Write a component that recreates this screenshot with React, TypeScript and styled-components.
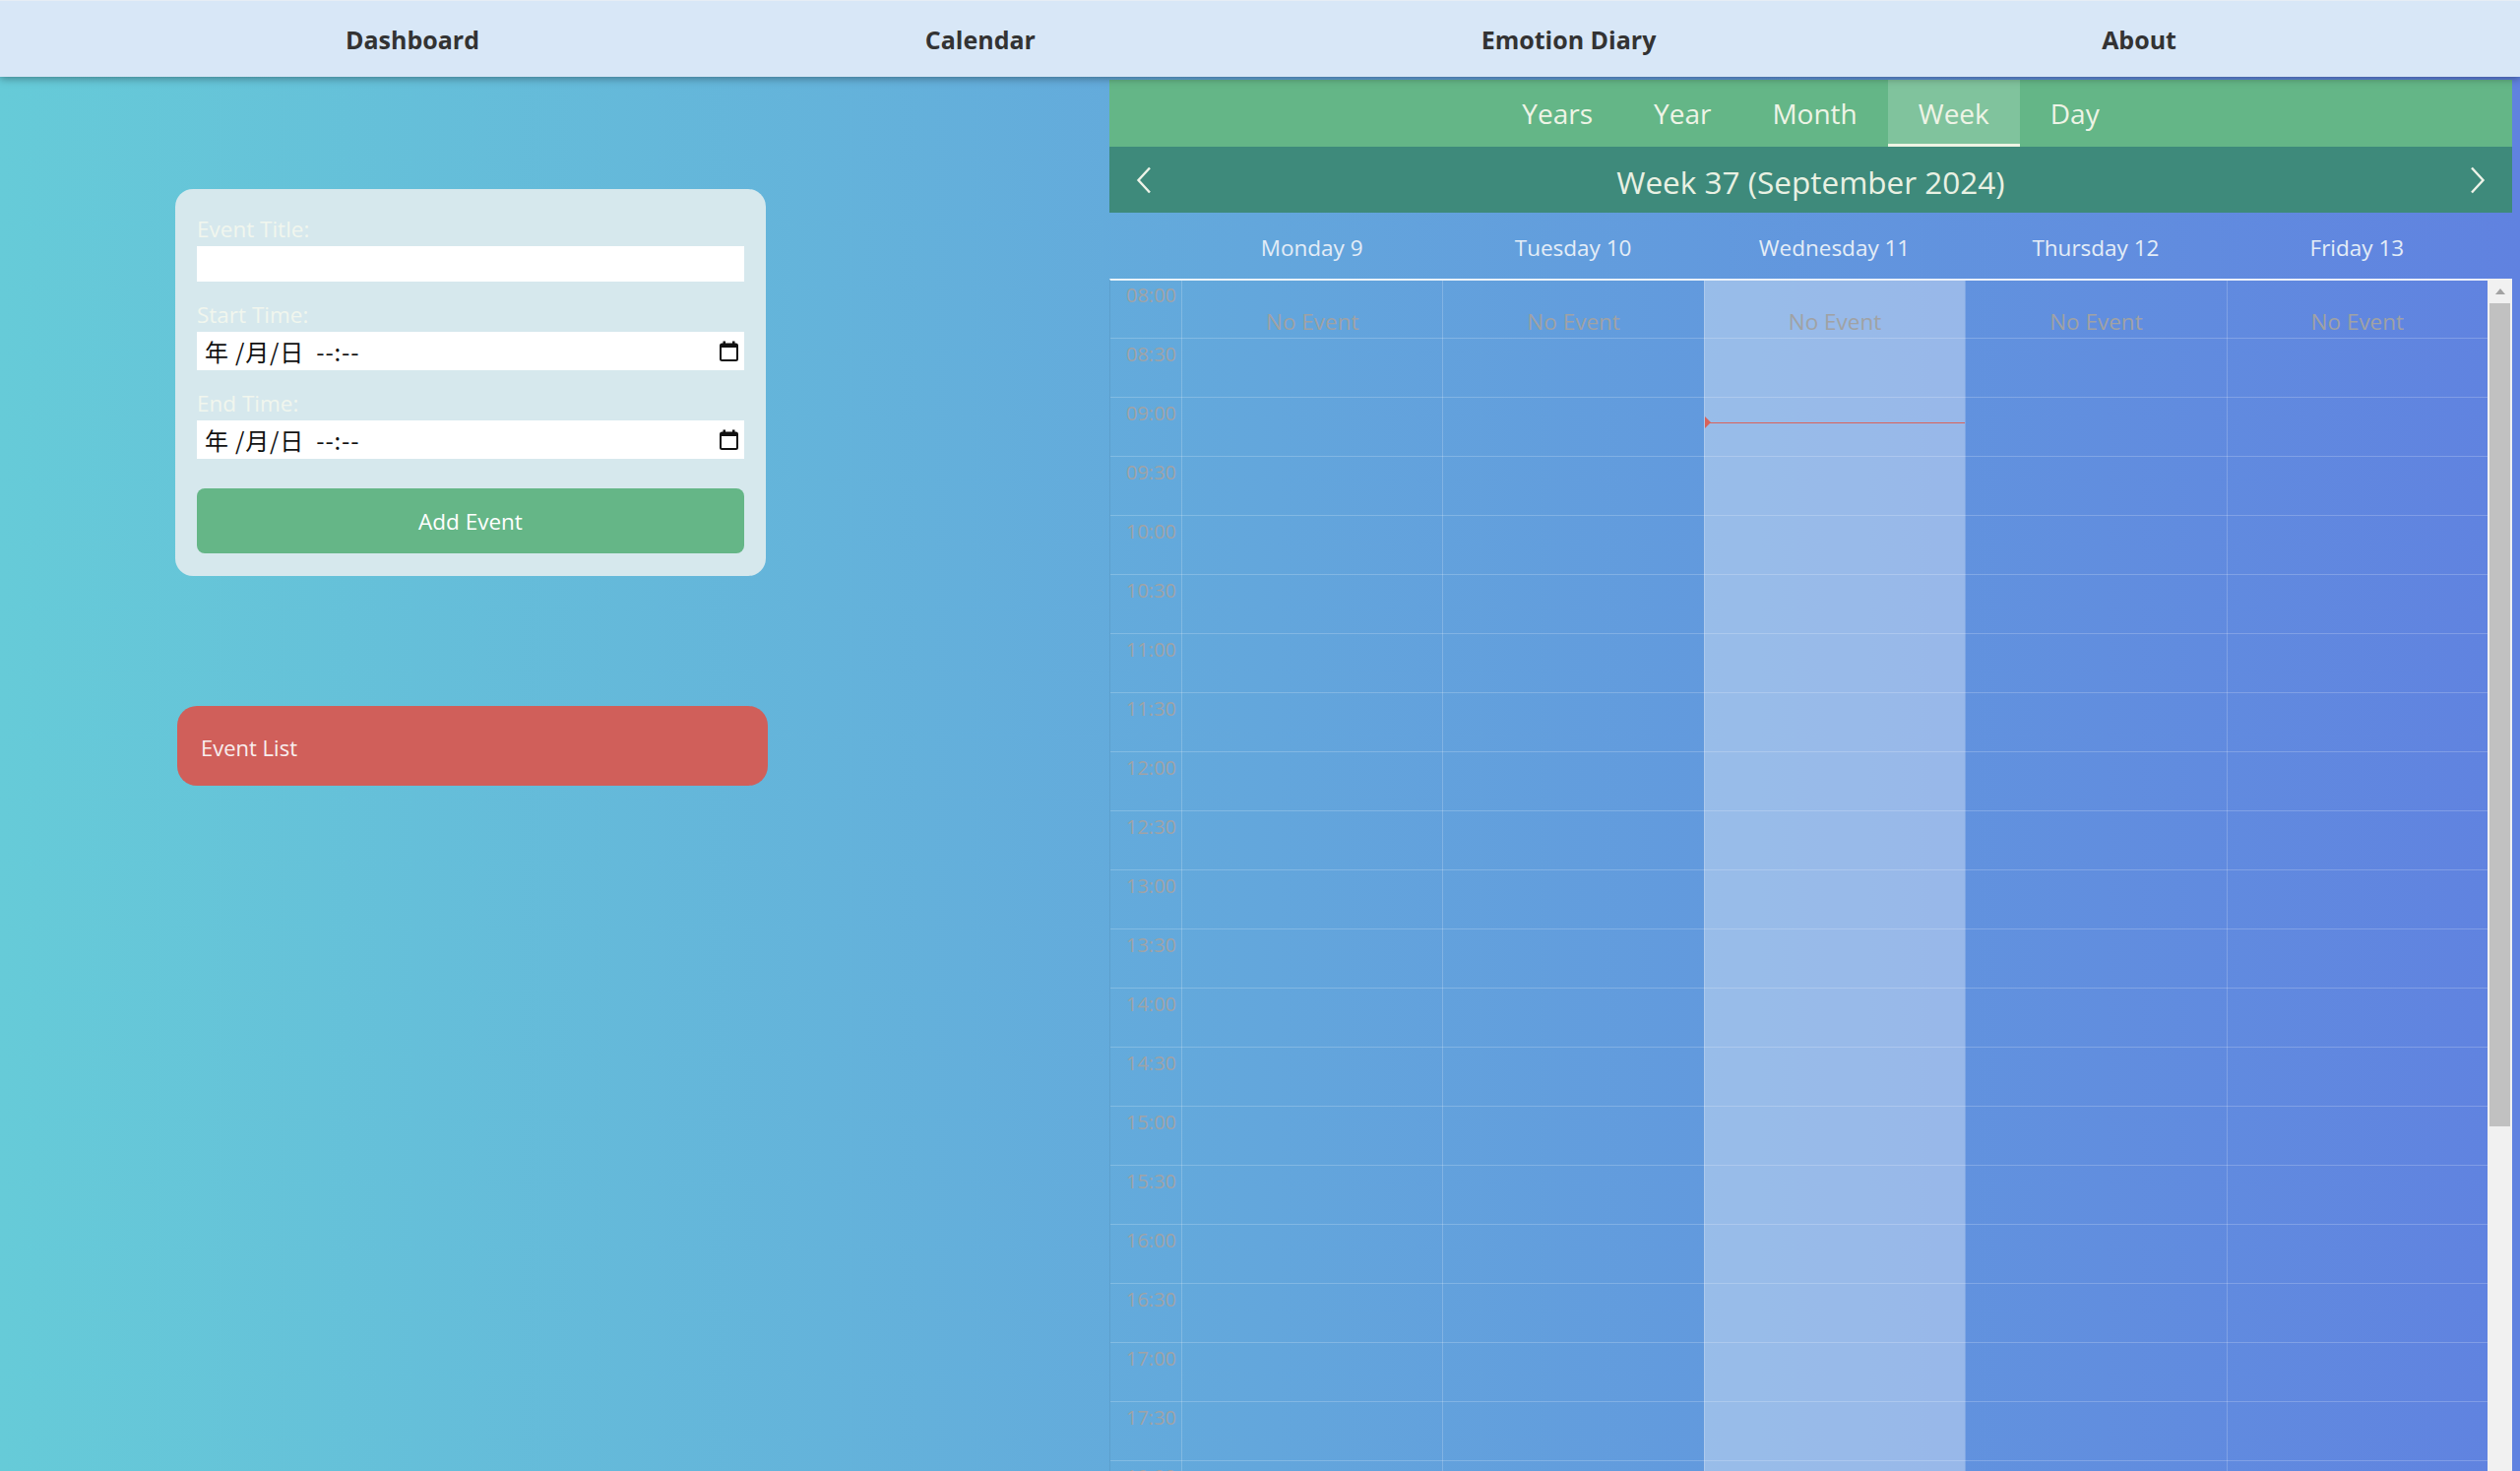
import React from 'react';
import styled, { createGlobalStyle } from 'styled-components';

const GlobalStyle = createGlobalStyle`
  html, body { margin: 0; padding: 0; overflow: hidden; }
  body { font-family: "Open Sans", "Noto Sans", sans-serif; }
  *, *::before, *::after { box-sizing: border-box; }
`;

const Page = styled.div`
  width: 2560px;
  height: 1494px;
  overflow: hidden;
  background: linear-gradient(90deg, #66cbd8 0%, #6082e0 100%);
  display: flex;
  flex-direction: column;
`;

const NavBar = styled.nav`
  flex: none;
  height: 78px;
  background: #d8e7f7;
  border-top: 1px solid #e6edf5;
  box-shadow: 0 2px 8px rgba(0, 0, 0, 0.35);
  display: flex;
  align-items: center;
  justify-content: space-between;
  padding: 0 349px 0 351px;
  position: relative;
  z-index: 2;
`;

const NavLink = styled.a`
  font-size: 25px;
  font-weight: 700;
  color: #333;
  text-decoration: none;
`;

const Main = styled.main`
  flex: 1;
  min-height: 0;
  display: flex;
`;

const LeftPane = styled.section`
  flex: none;
  width: 956px;
  display: flex;
  flex-direction: column;
  align-items: center;
  padding-top: 114px;
`;

const FormCard = styled.form`
  width: 600px;
  padding: 26px 22px 23px;
  background: #d6e8ed;
  border-radius: 18px;
  display: flex;
  flex-direction: column;
`;

const FieldGroup = styled.div<{ $gapAfter: number }>`
  display: flex;
  flex-direction: column;
  margin-bottom: ${(p) => p.$gapAfter}px;
`;

const Label = styled.label`
  font-size: 22.5px;
  line-height: 30px;
  color: #f1f6ee;
  margin-bottom: 2px;
`;

const TextInput = styled.input`
  height: 36px;
  border: none;
  outline: none;
  background: #fff;
  padding: 0 8px;
  font-size: 20px;
`;

const DateField = styled.div`
  height: 39px;
  background: #fff;
  display: flex;
  align-items: center;
  justify-content: space-between;
  padding: 0 6px 0 8px;
`;

const DateText = styled.span`
  font-family: "Noto Sans CJK SC", "Noto Sans", sans-serif;
  font-size: 24px;
  line-height: 30px;
  color: #111;
  letter-spacing: 0.8px;
  white-space: pre;
`;

const AddButton = styled.button`
  height: 66px;
  border: none;
  border-radius: 8px;
  background: #65b687;
  color: #fff;
  font-family: "Open Sans", sans-serif;
  font-size: 22.5px;
  padding-top: 2px;
`;

const EventListBox = styled.div`
  margin: 132px 0 0 4px;
  width: 600px;
  height: 81px;
  background: #d05f5a;
  border-radius: 20px;
  display: flex;
  align-items: center;
  padding: 2px 0 0 24px;
  color: #f8eeee;
  font-size: 22px;
`;

const CalendarPane = styled.section`
  flex: none;
  width: 1425px;
  margin: 3px 0 0 171px;
  display: flex;
  flex-direction: column;
`;

const TabBar = styled.div`
  height: 68px;
  background: #64b687;
  display: flex;
  justify-content: center;
`;

const Tab = styled.div<{ $active?: boolean }>`
  padding: 0 31px;
  display: flex;
  align-items: center;
  font-size: 28px;
  color: #eef4e6;
  background: ${(p) => (p.$active ? '#80c39d' : 'transparent')};
  border-bottom: 3px solid ${(p) => (p.$active ? '#eef4e4' : 'transparent')};
  border-top: 3px solid transparent;
`;

const WeekBar = styled.div`
  height: 67px;
  background: #3e8a7b;
  display: flex;
  align-items: center;
  justify-content: space-between;
  padding: 0 25px;
`;

const WeekTitle = styled.div`
  font-size: 31.5px;
  color: #e9f1e3;
  padding-top: 3px;
`;

const ChevronButton = styled.span`
  display: flex;
  width: 19px;
  justify-content: center;
`;

const DayHeaderRow = styled.div`
  height: 67px;
  display: flex;
  align-items: center;
  padding: 3px 25px 0 73px;
`;

const DayName = styled.div`
  flex: 1;
  text-align: center;
  font-size: 22.5px;
  color: #e4edf7;
`;

const BodyRow = styled.div`
  flex: 1;
  min-height: 0;
  display: flex;
`;

const GridBody = styled.div`
  flex: 1;
  display: flex;
  border-top: 2px solid rgba(255, 255, 255, 0.85);
  border-left: 1px solid rgba(0, 0, 0, 0.07);
  background-image: linear-gradient(
    to bottom,
    transparent 58px,
    rgba(255, 255, 255, 0.2) 58px,
    rgba(255, 255, 255, 0.2) 59px,
    transparent 59px
  );
  background-size: 100% 60px;
  background-repeat: repeat-y;
`;

const Gutter = styled.div`
  flex: none;
  width: 72px;
  display: flex;
  flex-direction: column;
`;

const TimeLabel = styled.div`
  flex: none;
  height: 60px;
  padding: 5px 5px 0 0;
  text-align: right;
  font-size: 20px;
  line-height: 20px;
  color: #a0a3a6;
`;

const DayColumn = styled.div<{ $today?: boolean }>`
  flex: 1;
  position: relative;
  border-left: 1px solid rgba(255, 255, 255, 0.2);
  background: ${(p) => (p.$today ? 'rgba(255, 255, 255, 0.35)' : 'transparent')};
`;

const NoEvent = styled.div`
  padding-top: 27px;
  text-align: center;
  font-size: 22.5px;
  line-height: 30px;
  color: #a0a2a4;
`;

const NowLine = styled.div`
  position: absolute;
  left: 0;
  right: 0;
  top: 144px;
  height: 1px;
  background: #d9625a;
  &::before {
    content: '';
    position: absolute;
    left: 0;
    top: -6px;
    border-left: 6px solid #d9625a;
    border-top: 6.5px solid transparent;
    border-bottom: 6.5px solid transparent;
  }
`;

const ScrollTrack = styled.div`
  flex: none;
  width: 25px;
  background: #f1f1f1;
  display: flex;
  flex-direction: column;
  align-items: center;
  padding: 0 2px;
`;

const ScrollArrow = styled.div`
  height: 25px;
  display: flex;
  align-items: center;
  justify-content: center;
  &::before {
    content: '';
    border-left: 5.5px solid transparent;
    border-right: 5.5px solid transparent;
    border-bottom: 6px solid #a3a3a3;
  }
`;

const ScrollThumb = styled.div`
  width: 21px;
  height: 836px;
  background: #c1c1c1;
`;

const CalendarIcon = () => (
  <svg width="19" height="21" viewBox="0 0 19 21">
    <rect x="1" y="3.5" width="17" height="16.5" rx="1.5" fill="none" stroke="#111" strokeWidth="2" />
    <rect x="1" y="3" width="17" height="4" fill="#111" />
    <rect x="3.5" y="0.5" width="2.5" height="3" fill="#111" />
    <rect x="13" y="0.5" width="2.5" height="3" fill="#111" />
  </svg>
);

const Chevron = ({ dir }: { dir: 'left' | 'right' }) => (
  <svg width="16" height="28" viewBox="0 0 16 28">
    <polyline
      points={dir === 'left' ? '14,1.5 2.5,14 14,26.5' : '2,1.5 13.5,14 2,26.5'}
      fill="none"
      stroke="#eef3e8"
      strokeWidth="2.4"
      strokeLinejoin="miter"
    />
  </svg>
);

const times = Array.from({ length: 22 }, (_, i) => {
  const m = 480 + i * 30;
  return `${String(Math.floor(m / 60)).padStart(2, '0')}:${m % 60 === 0 ? '00' : '30'}`;
});

const days = ['Monday 9', 'Tuesday 10', 'Wednesday 11', 'Thursday 12', 'Friday 13'];
const tabs = ['Years', 'Year', 'Month', 'Week', 'Day'];

export default function App() {
  return (
    <Page>
      <GlobalStyle />
      <NavBar>
        <NavLink>Dashboard</NavLink>
        <NavLink>Calendar</NavLink>
        <NavLink>Emotion Diary</NavLink>
        <NavLink>About</NavLink>
      </NavBar>
      <Main>
        <LeftPane>
          <FormCard onSubmit={(e) => e.preventDefault()}>
            <FieldGroup $gapAfter={19}>
              <Label>Event Title:</Label>
              <TextInput type="text" />
            </FieldGroup>
            <FieldGroup $gapAfter={19}>
              <Label>Start Time:</Label>
              <DateField>
                <DateText>{'年 /月/日  --:--'}</DateText>
                <CalendarIcon />
              </DateField>
            </FieldGroup>
            <FieldGroup $gapAfter={30}>
              <Label>End Time:</Label>
              <DateField>
                <DateText>{'年 /月/日  --:--'}</DateText>
                <CalendarIcon />
              </DateField>
            </FieldGroup>
            <AddButton type="submit">Add Event</AddButton>
          </FormCard>
          <EventListBox>Event List</EventListBox>
        </LeftPane>
        <CalendarPane>
          <TabBar>
            {tabs.map((t) => (
              <Tab key={t} $active={t === 'Week'}>
                {t}
              </Tab>
            ))}
          </TabBar>
          <WeekBar>
            <ChevronButton>
              <Chevron dir="left" />
            </ChevronButton>
            <WeekTitle>Week 37 (September 2024)</WeekTitle>
            <ChevronButton>
              <Chevron dir="right" />
            </ChevronButton>
          </WeekBar>
          <DayHeaderRow>
            {days.map((d) => (
              <DayName key={d}>{d}</DayName>
            ))}
          </DayHeaderRow>
          <BodyRow>
            <GridBody>
              <Gutter>
                {times.map((t) => (
                  <TimeLabel key={t}>{t}</TimeLabel>
                ))}
              </Gutter>
              {days.map((d, i) => (
                <DayColumn key={d} $today={i === 2}>
                  <NoEvent>No Event</NoEvent>
                  {i === 2 && <NowLine />}
                </DayColumn>
              ))}
            </GridBody>
            <ScrollTrack>
              <ScrollArrow />
              <ScrollThumb />
            </ScrollTrack>
          </BodyRow>
        </CalendarPane>
      </Main>
    </Page>
  );
}
